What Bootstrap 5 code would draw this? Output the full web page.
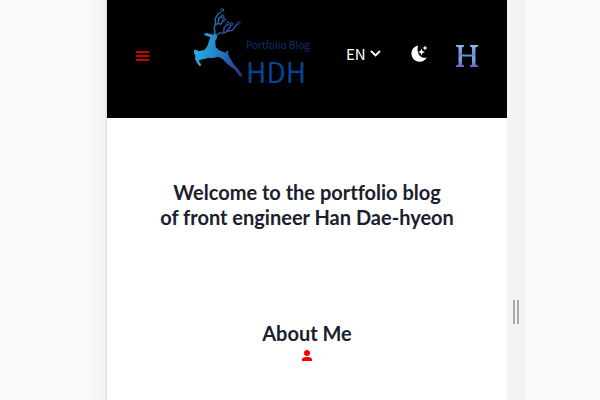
<!DOCTYPE html>
<html lang="en">
<head>
<meta charset="utf-8">
<meta name="viewport" content="width=device-width, initial-scale=1">
<title>Portfolio Blog HDH</title>
<link href="https://cdn.jsdelivr.net/npm/bootstrap@5.3.0/dist/css/bootstrap.min.css" rel="stylesheet">
<style>
body { font-family: "Noto Sans", "Open Sans", sans-serif; background: #f8faf9; }
.stage { display: grid; grid-template-columns: 107fr minmax(0, 400fr) 18px 75fr; }
.gutter-left { background: linear-gradient(to right, #f8faf9 84%, #f1f3f3 98%, #d9dbdb 100%); }
.resizer { background: #f1f3f5; padding-top: 224px; gap: 2px; }
.resizer i { width: 2px; height: 24px; background: #a6a8aa; }
.topbar { background: #000; height: 118px; padding: 0 28px 6px; }
.plain { background: none; border: 0; padding: 0; line-height: 0; }
.brand { color: #034694; margin-left: 42px; padding-bottom: 17px; font-family: "Noto Sans CJK KR", sans-serif; }
.brand-text { padding: 32px 0 0 3px; white-space: nowrap; }
.brand-sub { font-size: 10px; line-height: 16px; color: #03356f; }
.brand-name { font-size: 28px; line-height: 37px; }
.lang { appearance: none; background: transparent; border: 0; color: #fff; font-family: "Noto Sans CJK KR", sans-serif; font-size: 15px; line-height: 20px; width: 20px; padding: 0; }
.lang option { color: #000; }
.tools { padding-bottom: 4px; }
.home { padding-top: 4px; margin-left: 26px; }
.headline { font-family: Lato, sans-serif; font-weight: 700; font-size: 20px; line-height: 25px; color: #1a202c; margin: 0; font-variant-ligatures: none; }
.intro { padding-top: 62px; }
.about { padding-top: 91px; }
</style>
<script src="https://cdn.jsdelivr.net/npm/bootstrap@5.3.0/dist/js/bootstrap.bundle.min.js"></script>
</head>
<body>
<div class="stage min-vh-100">
  <div class="gutter-left"></div>
  <div class="bg-white">
    <header class="topbar d-flex align-items-center justify-content-between">
      <div class="d-flex align-items-center">
        <button class="plain" type="button" aria-label="Menu">
          <svg width="16" height="16" viewBox="0 0 16 16" fill="none" stroke="#c80000" stroke-width="2"><path d="M1 4h13M1 8h13M1 12h13"/></svg>
        </button>
        <a class="brand d-flex align-items-start text-decoration-none" href="#">
          <svg width="50" height="80" viewBox="24 15 150 240">
            <defs><linearGradient id="deer" gradientUnits="userSpaceOnUse" x1="28" y1="150" x2="172" y2="185"><stop offset="0" stop-color="#29b0e8"/><stop offset=".45" stop-color="#2382c5"/><stop offset="1" stop-color="#2c3591"/></linearGradient></defs>
            <path fill="url(#deer)" d="M57 101L66 99 83 104 91 100 97 106 95 117 91 122 92 141 102 151 121 158 126 153 132 154 128 160 133 170 145 191 160 208 170 222 171 232 163 227 151 211 126 191 113 177 99 170 82 175 71 173 55 178 43 180 42 185 48 192 47 199 41 191 37 182 32 168 27 160 27 151 34 149 41 154 58 150 67 139 72 123 76 112 67 109 60 106Z"/>
            <path fill="#28a9e2" d="M32 162L39 180 47 194 43 199 35 187 30 177Z"/>
            <g fill="none" stroke="#246eb5" stroke-width="4">
              <path d="M88 104L90 92 87 85 91 74 91 55 99 42 108 36M91 76L99 69 101 54 110 51M98 70L107 73 115 62"/>
              <path d="M94 105L105 98 115 100 126 94 142 91 151 78 158 71M116 98L117 85 124 76 130 74M124 94L133 84 138 74" stroke="#2858a8"/>
              <g stroke-width="3"><circle cx="112" cy="30" r="4"/><circle cx="113" cy="48" r="4"/><circle cx="117" cy="59" r="4"/><circle cx="129" cy="70" r="4" stroke="#2858a8"/><circle cx="140" cy="72" r="4" stroke="#2858a8"/><circle cx="161" cy="69" r="4" stroke="#2d3e9b"/></g>
            </g>
          </svg>
          <span class="brand-text d-flex flex-column">
            <span class="brand-sub">Portfolio Blog</span>
            <span class="brand-name">HDH</span>
          </span>
        </a>
      </div>
      <div class="tools d-flex align-items-center">
        <label class="d-flex align-items-center me-4">
          <select class="lang" aria-label="Language"><option>EN</option><option>KO</option></select>
          <svg class="ms-1" width="11" height="8" viewBox="0 0 11 8" fill="none" stroke="#fff" stroke-width="1.800"><path d="M1 1l4.500 4.500L10 1"/></svg>
        </label>
        <button class="plain ms-1" type="button" aria-label="Toggle dark mode">
          <svg width="20" height="20" viewBox="0 0 20 20" fill="#fff"><path d="M9 1.500A8.200 8.200 0 1 0 17.800 13.500C12 15 7 10 9 1.500Z"/><path d="M12.500 4.500l1 2.500 2.500 1-2.500 1-1 2.500-1-2.500-2.500-1 2.500-1ZM16 1.500l.8 1.700 1.700.8-1.700.8-.8 1.700-.8-1.700-1.700-.8 1.700-.8Z"/></svg>
        </button>
        <a class="home lh-1" href="#" aria-label="Home">
          <svg width="24" height="24" viewBox="0 0 24 24"><defs><linearGradient id="hfill" x1="0" y1="0" x2="0" y2="1"><stop offset="0" stop-color="#90b8e6"/><stop offset=".45" stop-color="#5c8bd0"/><stop offset=".6" stop-color="#86a7e2"/><stop offset="1" stop-color="#6265bd"/></linearGradient></defs><path fill="url(#hfill)" d="M1 1H9V2.500L7 3.500V10.500H17V3.500L15 2.500V1H23V2.500L20.500 3.500V20.500L23 21.500V23H15V21.500L17 20.500V12.500H7V20.500L9 21.500V23H1V21.500L3.500 20.500V3.500L1 2.500Z"/></svg>
        </a>
      </div>
    </header>
    <main class="text-center">
      <section class="intro"><h1 class="headline">Welcome to the portfolio blog<br>of front engineer Han Dae-hyeon</h1></section>
      <section class="about">
        <h2 class="headline">About Me</h2>
        <svg class="d-block mx-auto" width="12" height="20" viewBox="0 0 12 20" fill="#f00"><circle cx="6" cy="7" r="3"/><path d="M1 15v-1.500C1 11.500 4 11 6 11s5 .5 5 2.500V15Z"/></svg>
      </section>
    </main>
  </div>
  <div class="resizer d-flex justify-content-center align-items-center pb-0"><i></i><i></i></div>
  <div></div>
</div>
</body>
</html>
